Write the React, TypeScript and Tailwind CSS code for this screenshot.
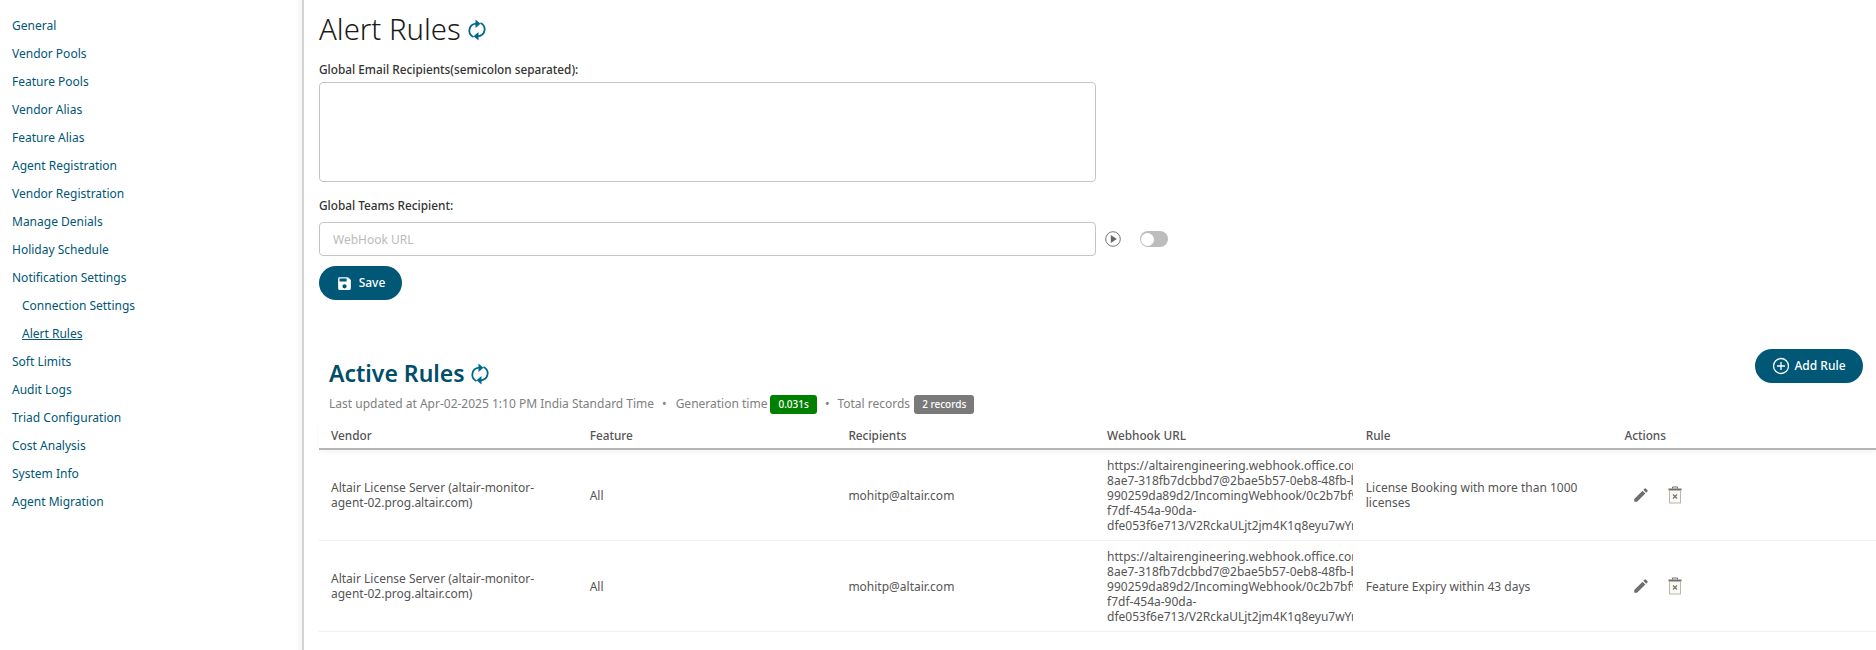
import React from "react";

const NAV: [string, number?][] = [
  ["General"], ["Vendor Pools"], ["Feature Pools"], ["Vendor Alias"], ["Feature Alias"],
  ["Agent Registration"], ["Vendor Registration"], ["Manage Denials"], ["Holiday Schedule"],
  ["Notification Settings"], ["Connection Settings", 1], ["Alert Rules", 2], ["Soft Limits"],
  ["Audit Logs"], ["Triad Configuration"], ["Cost Analysis"], ["System Info"], ["Agent Migration"],
];

const URL_LINES = [
  "https://altairengineering.webhook.office.com/webhookb2/a1c1f1d2-",
  "8ae7-318fb7dcbbd7@2bae5b57-0eb8-48fb-b1e3-",
  "990259da89d2/IncomingWebhook/0c2b7bf9a7a14f0e/",
  "f7df-454a-90da-",
  "dfe053f6e713/V2RckaULjt2jm4K1q8eyu7wYrTnQ",
];

function Sync() {
  return (
    <svg width="18" height="22" viewBox="0 0 18 22" fill="none" stroke="#00688b" strokeWidth="1.800">
      <path d="M5.500 18C2.500 16.500 1 13.800 1.400 10.800 1.900 7.500 4.500 5 8 4.700" />
      <path d="M12.500 4C15.500 5.500 17 8.200 16.600 11.200 16.100 14.500 13.500 17 10 17.300" />
      <path d="M7.500 0.500l5 4.200-5 4.200z" fill="#00688b" stroke="none" />
      <path d="M10.500 21.500l-5-4.200 5-4.200z" fill="#00688b" stroke="none" />
    </svg>
  );
}

function Pencil() {
  return (
    <svg width="18" height="18" viewBox="0 0 24 24" fill="#6e6e6e">
      <path d="M3 17.250V21h3.750L17.810 9.940l-3.750-3.750L3 17.250zM20.710 7.040a1 1 0 0 0 0-1.410l-2.340-2.340a1 1 0 0 0-1.410 0l-1.830 1.830 3.750 3.750 1.830-1.830z" />
    </svg>
  );
}

function Trash() {
  return (
    <svg width="14" height="18" viewBox="0 0 14 18" fill="none">
      <path d="M4.500 2.500V1h5v1.500" stroke="#6e6e6e" strokeWidth="1" />
      <path d="M0.500 3.500h13" stroke="#6e6e6e" strokeWidth="2" />
      <rect x="1.500" y="4.500" width="11" height="12.500" fill="#faf8f2" stroke="#bdb7a8" strokeWidth="1" />
      <path d="M5 8.500l4 4M9 8.500l-4 4" stroke="#6e6e6e" strokeWidth="1.100" />
    </svg>
  );
}

function Row({ rule }: { rule: React.ReactNode }) {
  return (
    <div className="grid grid-cols-[repeat(5,258.700px)_1fr] items-center h-[91px] border-b border-[#f0f0f0] text-[12px] leading-[15px] text-[#555]">
      <div className="pl-[12px] pr-3">Altair License Server (altair-monitor-agent-02.prog.altair.com)</div>
      <div className="pl-[12px]">All</div>
      <div className="pl-[12px]">mohitp@altair.com</div>
      <div className="pl-[12px]">
        <div className="w-[246px] overflow-hidden">
          {URL_LINES.map((l) => (
            <div key={l} className="whitespace-nowrap">{l}</div>
          ))}
        </div>
      </div>
      <div className="pl-[12px] pr-8">{rule}</div>
      <div className="flex items-center gap-[18px] pl-[20px]">
        <Pencil />
        <Trash />
      </div>
    </div>
  );
}

export default function App() {
  return (
    <div className="flex h-[650px] overflow-hidden bg-white font-['Noto_Sans',sans-serif]">
      <nav className="w-[298px] shrink-0 pt-[12px] text-[12px] text-[#005776]">
        {NAV.map(([label, lvl]) => (
          <div key={label} className={`h-[28px] flex items-center ${lvl ? "pl-[22px]" : "pl-[12px]"}`}>
            <span className={lvl === 2 ? "underline" : ""}>{label}</span>
          </div>
        ))}
      </nav>
      <div className="w-[6px] shrink-0 bg-[#f7f7f7] border-r-2 border-[#d4d4d4]" />
      <main className="flex-1 min-w-0 pl-[15px]">
        <div className="flex items-center gap-[7px] h-[60px]">
          <h1 className="text-[29.300px] font-light text-[#1a1a1a] leading-none">Alert Rules</h1>
          <Sync />
        </div>
        <label className="block text-[11.800px] font-medium text-[#333] leading-[18px]">Global Email Recipients(semicolon separated):</label>
        <textarea className="block mt-[4px] w-[777px] h-[100px] border border-[#c4c4c4] rounded-[4px] resize-none" />
        <label className="block mt-[14px] text-[11.800px] font-medium text-[#333] leading-[18px]">Global Teams Recipient:</label>
        <div className="flex items-center mt-[8px]">
          <input placeholder="WebHook URL" className="w-[777px] h-[34px] border border-[#c4c4c4] rounded-[4px] px-[13px] text-[12px] placeholder:text-[#bbb]" />
          <svg className="ml-[9px]" width="16" height="16" viewBox="0 0 16 16" fill="none">
            <circle cx="8" cy="8" r="7.300" stroke="#777" strokeWidth="1" />
            <path d="M5.800 4v8l6-4z" fill="#666" />
          </svg>
          <div className="ml-[19px] w-[28px] h-[16px] rounded-full bg-[#bdbdbd] flex items-center pl-[1px]">
            <div className="w-[13px] h-[13px] rounded-full bg-white" />
          </div>
        </div>
        <button className="mt-[10px] w-[83px] h-[34px] rounded-full bg-[#005776] text-white text-[12px] font-medium flex items-center justify-center gap-[6px]">
          <svg width="17" height="17" viewBox="0 0 24 24" fill="#fff">
            <path d="M17 3H5a2 2 0 0 0-2 2v14a2 2 0 0 0 2 2h14a2 2 0 0 0 2-2V7l-4-4zm-5 16a3 3 0 1 1 0-6 3 3 0 0 1 0 6zm3-10H5V5h10v4z" />
          </svg>
          Save
        </button>
        <div className="flex items-start justify-between mt-[51px] h-[45px]">
          <div className="flex items-center gap-[6px] pl-[10px] h-[45px]">
            <h2 className="text-[23px] font-semibold text-[#004e6a] leading-none">Active Rules</h2>
            <Sync />
          </div>
          <button className="mr-[13px] w-[108px] h-[34px] rounded-full bg-[#005776] text-white text-[12px] font-medium flex items-center justify-center gap-[4px] mt-[-2px]">
            <svg width="18" height="18" viewBox="0 0 18 18" fill="none" stroke="#fff" strokeWidth="1.300">
              <circle cx="9" cy="9" r="7.500" />
              <path d="M9 5v8M5 9h8" />
            </svg>
            Add Rule
          </button>
        </div>
        <div className="flex items-center pl-[10px] h-[20px] text-[12px] text-[#808080] -mt-[2px]">
          <span>Last updated at Apr-02-2025 1:10 PM India Standard Time</span>
          <span className="ml-[8px] mr-[9px]">•</span>
          <span>Generation time</span>
          <span className="ml-[3px] h-[19px] px-[8px] rounded-[3px] bg-[#008000] text-white text-[10px] font-medium flex items-center">0.031s</span>
          <span className="mx-[8px]">•</span>
          <span>Total records</span>
          <span className="ml-[4px] h-[19px] px-[8px] rounded-[3px] bg-[#7a7a7a] text-white text-[10px] font-medium flex items-center">2 records</span>
        </div>
        <div className="grid grid-cols-[repeat(5,258.700px)_1fr] items-center h-[29px] pt-[3px] mt-[7px] border-b-2 border-[#b5b5b5] text-[11.800px] font-medium text-[#555] shadow-[0_3px_5px_rgba(0,0,0,0.04)]">
          {["Vendor", "Feature", "Recipients", "Webhook URL", "Rule", "Actions"].map((h) => (
            <div key={h} className="pl-[12px]">{h}</div>
          ))}
        </div>
        <Row rule="License Booking with more than 1000 licenses" />
        <Row rule="Feature Expiry within 43 days" />
      </main>
    </div>
  );
}
